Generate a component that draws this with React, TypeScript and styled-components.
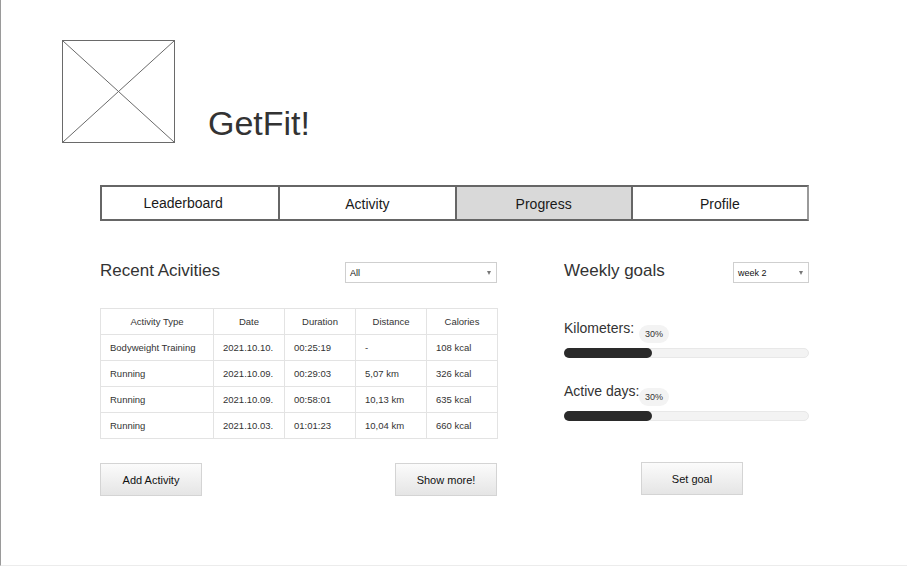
import styled, { createGlobalStyle } from 'styled-components';

const GlobalStyle = createGlobalStyle`
  html, body {
    margin: 0;
    padding: 0;
    background: #fff;
  }
  body {
    font-family: 'Liberation Sans', Arial, sans-serif;
    overflow: hidden;
  }
`;

const tabs = ['Leaderboard', 'Activity', 'Progress', 'Profile'];

const activities = [
  { type: 'Bodyweight Training', date: '2021.10.10.', duration: '00:25:19', distance: '-', calories: '108 kcal' },
  { type: 'Running', date: '2021.10.09.', duration: '00:29:03', distance: '5,07 km', calories: '326 kcal' },
  { type: 'Running', date: '2021.10.09.', duration: '00:58:01', distance: '10,13 km', calories: '635 kcal' },
  { type: 'Running', date: '2021.10.03.', duration: '01:01:23', distance: '10,04 km', calories: '660 kcal' },
];

const goals = [
  { label: 'Kilometers:', percent: 30, fill: 36.3 },
  { label: 'Active days:', percent: 30, fill: 36.3 },
];

const App = () => {
  return (
    <Page>
      <GlobalStyle />
      <Header>
        <Logo>
          <svg width="111" height="101" viewBox="0 0 111 101">
            <line x1="0" y1="0" x2="111" y2="101" stroke="#6a6a6a" strokeWidth="1" />
            <line x1="111" y1="0" x2="0" y2="101" stroke="#6a6a6a" strokeWidth="1" />
          </svg>
        </Logo>
        <Title>GetFit!</Title>
      </Header>

      <TabBar>
        {tabs.map((tab, i) => (
          <Tab key={tab} $active={tab === 'Progress'} $first={i === 0}>
            {tab}
          </Tab>
        ))}
      </TabBar>

      <Main>
        <LeftColumn>
          <HeadRow>
            <Heading>Recent Acivities</Heading>
            <Select $width={152}>
              <span>All</span>
              <Arrow />
            </Select>
          </HeadRow>

          <Table>
            <colgroup>
              <col style={{ width: 113 }} />
              <col style={{ width: 71 }} />
              <col style={{ width: 71 }} />
              <col style={{ width: 71 }} />
              <col style={{ width: 71 }} />
            </colgroup>
            <thead>
              <tr>
                <Th>Activity Type</Th>
                <Th>Date</Th>
                <Th>Duration</Th>
                <Th>Distance</Th>
                <Th>Calories</Th>
              </tr>
            </thead>
            <tbody>
              {activities.map((a, i) => (
                <tr key={i}>
                  <Td>{a.type}</Td>
                  <Td>{a.date}</Td>
                  <Td>{a.duration}</Td>
                  <Td>{a.distance}</Td>
                  <Td>{a.calories}</Td>
                </tr>
              ))}
            </tbody>
          </Table>

          <ButtonRow>
            <Button>Add Activity</Button>
            <Button>Show more!</Button>
          </ButtonRow>
        </LeftColumn>

        <RightColumn>
          <HeadRow>
            <Heading>Weekly goals</Heading>
            <Select $width={76}>
              <span>week 2</span>
              <Arrow />
            </Select>
          </HeadRow>

          <Goals>
            {goals.map((g) => (
              <Goal key={g.label}>
                <GoalRow>
                  <GoalLabel>{g.label}</GoalLabel>
                  <Badge>{g.percent}%</Badge>
                </GoalRow>
                <Track>
                  <Fill $fill={g.fill} />
                </Track>
              </Goal>
            ))}
          </Goals>

          <GoalButton>Set goal</GoalButton>
        </RightColumn>
      </Main>
    </Page>
  );
};

const Page = styled.div`
  width: 907px;
  height: 566px;
  box-sizing: border-box;
  border-left: 1px solid #9a9a9a;
  border-bottom: 1px solid #ececec;
  padding-top: 40px;
  background: #fff;
`;

const Header = styled.div`
  display: flex;
  align-items: flex-end;
  padding-left: 61px;
`;

const Logo = styled.div`
  width: 113px;
  height: 103px;
  box-sizing: border-box;
  border: 1px solid #6a6a6a;
  display: flex;

  svg {
    display: block;
  }
`;

const Title = styled.h1`
  margin: 0 0 3px 33px;
  font-size: 34px;
  line-height: 34px;
  font-weight: normal;
  color: #333;
`;

const TabBar = styled.div`
  display: grid;
  grid-template-columns: repeat(4, 1fr);
  width: 709px;
  height: 36px;
  box-sizing: border-box;
  margin: 42px 0 0 99px;
  border: 2px solid #666;
  border-right-color: #9a9a9a;
`;

const Tab = styled.div<{ $active?: boolean; $first?: boolean }>`
  min-width: 0;
  display: flex;
  align-items: center;
  justify-content: center;
  padding-right: ${(p) => (p.$first ? '14px' : '0')};
  padding-top: ${(p) => (p.$first ? '0' : '1px')};
  font-size: 14px;
  color: #1a1a1a;
  background: ${(p) => (p.$active ? '#d9d9d9' : '#fff')};

  & + & {
    border-left: 2px solid #666;
  }
`;

const Main = styled.div`
  display: flex;
  gap: 67px;
  margin: 41px 0 0 99px;
`;

const LeftColumn = styled.div`
  width: 397px;
`;

const RightColumn = styled.div`
  width: 245px;
`;

const HeadRow = styled.div`
  display: flex;
  align-items: flex-start;
  justify-content: space-between;
  height: 21px;
`;

const Heading = styled.h2`
  margin: 0;
  font-size: 17px;
  line-height: 17px;
  font-weight: normal;
  color: #333;
`;

const Select = styled.div<{ $width: number }>`
  width: ${(p) => p.$width}px;
  height: 21px;
  box-sizing: border-box;
  border: 1px solid #cfcfcf;
  background: #fff;
  display: flex;
  align-items: center;
  justify-content: space-between;
  padding: 0 5px 0 4px;
  font-size: 9px;
  color: #111;
`;

const Arrow = styled.span`
  width: 0;
  height: 0;
  border-left: 2.5px solid transparent;
  border-right: 2.5px solid transparent;
  border-top: 4px solid #777;
`;

const Table = styled.table`
  width: 397px;
  margin-top: 25px;
  border-collapse: collapse;
  table-layout: fixed;
  border: 1px solid #e3e3e3;
`;

const Th = styled.th`
  height: 25px;
  padding: 0;
  border: 1px solid #e3e3e3;
  font-size: 9.5px;
  line-height: 11px;
  font-weight: normal;
  color: #333;
  text-align: center;
`;

const Td = styled.td`
  height: 25px;
  padding: 0 0 0 9px;
  border: 1px solid #e3e3e3;
  font-size: 9.5px;
  line-height: 11px;
  color: #333;
  text-align: left;
  white-space: nowrap;
`;

const ButtonRow = styled.div`
  display: flex;
  justify-content: space-between;
  margin-top: 24px;
`;

const Button = styled.button`
  width: 102px;
  height: 33px;
  box-sizing: border-box;
  border: 1px solid #d4d4d4;
  border-radius: 0;
  background: linear-gradient(#fbfbfb, #e5e5e5);
  font-family: 'Liberation Sans', Arial, sans-serif;
  font-size: 11px;
  color: #111;
  padding: 0;
`;

const GoalButton = styled(Button)`
  display: block;
  margin: 41px 0 0 77px;
`;

const Goals = styled.div`
  display: flex;
  flex-direction: column;
  gap: 25px;
  margin-top: 37px;
`;

const Goal = styled.div`
  display: flex;
  flex-direction: column;
`;

const GoalRow = styled.div`
  display: flex;
  align-items: flex-start;
`;

const GoalLabel = styled.div`
  width: 75px;
  font-size: 14px;
  line-height: 16px;
  color: #333;
  white-space: nowrap;
`;

const Badge = styled.div`
  margin-top: 5px;
  height: 18px;
  padding: 0 6px;
  border-radius: 9px;
  background: #f3f3f3;
  font-size: 9px;
  line-height: 18px;
  color: #333;
`;

const Track = styled.div`
  margin-top: 5px;
  height: 10px;
  box-sizing: border-box;
  border: 1px solid #e8e8e8;
  border-radius: 5px;
  background: #f3f3f3;
  position: relative;
`;

const Fill = styled.div<{ $fill: number }>`
  position: absolute;
  left: -1px;
  top: -1px;
  bottom: -1px;
  width: ${(p) => p.$fill}%;
  border-radius: 5px;
  background: #2a2a2a;
`;

export default App;
